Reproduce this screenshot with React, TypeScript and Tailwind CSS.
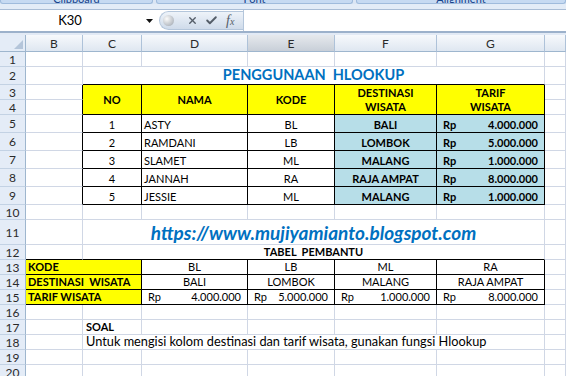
import type { ReactNode } from 'react';
import { X, Check } from 'lucide-react';

/* ── Sheet cells ── */

function Cell({
  className = '',
  r = false,
  b = false,
  middle = false,
  children,
}: {
  className?: string;
  r?: boolean;
  b?: boolean;
  middle?: boolean;
  children?: ReactNode;
}) {
  return (
    <div
      className={`flex min-w-0 whitespace-pre border-r border-b ${middle ? 'items-center' : 'items-end pb-[1px]'} ${
        r ? 'border-r-black' : 'border-r-[#d0d7e5]'
      } ${b ? 'border-b-black' : 'border-b-[#d0d7e5]'} ${className}`}
    >
      {children}
    </div>
  );
}

function RowHead({ n }: { n: number }) {
  return (
    <div className="flex items-center justify-center border-r border-b border-r-[#9eb6ce] border-b-[#c3d2e4] bg-[#e4ecf7] text-[12px] text-[#2a2a2a]">
      {n}
    </div>
  );
}

function ColHead({ label, hover = false }: { label: string; hover?: boolean }) {
  return (
    <div
      className={`flex items-center justify-center border-r border-b border-r-[#aec2d9] border-b-[#9eb6ce] bg-linear-to-b text-[12px] text-[#2a2a2a] ${
        hover ? 'from-[#e6e9ed] to-[#c8cfd8]' : 'from-[#f7f9fc] to-[#dfe7f1]'
      }`}
    >
      {label}
    </div>
  );
}

function Blank({ n }: { n: number }) {
  return (
    <>
      <RowHead n={n} />
      <Cell />
      <Cell />
      <Cell />
      <Cell />
      <Cell />
      <Cell />
      <Cell />
    </>
  );
}

function Money({ v, bold = false }: { v: string; bold?: boolean }) {
  return (
    <Cell r b className={`justify-between px-[6px] ${bold ? 'bg-[#b7dee8] font-bold' : ''}`}>
      <span>Rp</span>
      <span>{v}</span>
    </Cell>
  );
}

function RibbonGroup({ label, className }: { label: string; className: string }) {
  return (
    <div className={`h-[4px] overflow-hidden rounded-b-[3px] border-x border-b border-[#9fbbdc] bg-[#c6daf2] ${className}`}>
      <div className="-mt-[8px] text-center text-[11px] leading-[13px] text-[#15428b]">{label}</div>
    </div>
  );
}

const students = [
  { no: 1, nama: 'ASTY', kode: 'BL', dest: 'BALI', tarif: '4.000.000' },
  { no: 2, nama: 'RAMDANI', kode: 'LB', dest: 'LOMBOK', tarif: '5.000.000' },
  { no: 3, nama: 'SLAMET', kode: 'ML', dest: 'MALANG', tarif: '1.000.000' },
  { no: 4, nama: 'JANNAH', kode: 'RA', dest: 'RAJA AMPAT', tarif: '8.000.000' },
  { no: 5, nama: 'JESSIE', kode: 'ML', dest: 'MALANG', tarif: '1.000.000' },
];

const head = 'justify-center bg-[#ffff00] font-bold row-span-2';

export default function App() {
  return (
    <div className="h-[376px] w-[566px] overflow-hidden bg-white font-['Lato',sans-serif] text-[11px] leading-[13px] text-black">
      {/* ── Ribbon remnant ── */}
      <div className="flex h-[4px] gap-[3px] bg-[#dbe6f4]">
        <RibbonGroup label="Clipboard" className="w-[153px]" />
        <RibbonGroup label="Font" className="w-[197px]" />
        <RibbonGroup label="Alignment" className="flex-1" />
      </div>
      <div className="h-[6px] border-b border-[#a9bdd6] bg-[#e3ecf7]" />

      {/* ── Formula bar ── */}
      <div className="flex h-[21px] items-center bg-white">
        <div className="flex w-[159px] items-center">
          <span className="w-[140px] text-center text-[13px]">K30</span>
          <svg width="7" height="4" viewBox="0 0 7 4" className="ml-[6px]">
            <path d="M0 0h7L3.5 4z" fill="#111" />
          </svg>
        </div>
        <div className="flex h-[19px] w-[84px] items-center rounded-l-full border border-r-0 border-[#b4c6db] bg-linear-to-b from-[#eef3f9] to-[#cfdbea] pl-[3px]">
          <div className="h-[11px] w-[11px] rounded-full bg-radial-[at_35%_35%] from-[#fbfbfb] to-[#9aa2ac]" />
          <X className="ml-[13px] h-[11px] w-[11px] text-[#545d68]" strokeWidth={3} />
          <Check className="ml-[7px] h-[13px] w-[13px] text-[#545d68]" strokeWidth={3.5} />
          <span className="ml-[8px] font-['Liberation_Serif',serif] text-[14px] leading-none text-[#545d68] italic">
            f<span className="text-[10px]">x</span>
          </span>
        </div>
        <div className="h-full flex-1 border-l border-[#b4c6db]" />
      </div>
      <div className="h-[4px] border-t-2 border-[#9cb1cb] bg-[#e2eaf5]" />

      {/* ── Worksheet ── */}
      <div className="grid grid-cols-[26px_57px_59px_106px_87px_102px_108px_1fr] grid-rows-[17px_15px_18px_15px_15px_18px_18px_18px_18px_18px_15px_25px_15px_15px_15px_15px_15px_15px_15px_15px_15px]">
        {/* header row */}
        <div className="flex items-end justify-end border-r border-b border-r-[#9eb6ce] border-b-[#9eb6ce] bg-[#e4ecf7] p-[2px]">
          <svg width="9" height="9" viewBox="0 0 9 9">
            <path d="M9 0v9H0z" fill="#b4c5da" />
          </svg>
        </div>
        <ColHead label="B" />
        <ColHead label="C" />
        <ColHead label="D" />
        <ColHead label="E" hover />
        <ColHead label="F" />
        <ColHead label="G" />
        <ColHead label="" />

        <Blank n={1} />

        {/* row 2: title */}
        <RowHead n={2} />
        <Cell />
        <Cell b className="col-span-5 justify-center text-[14.5px] leading-[17px] font-bold text-[#0070c0]">
          PENGGUNAAN  HLOOKUP
        </Cell>
        <Cell />

        {/* rows 3-4: table header */}
        <RowHead n={3} />
        <Cell r />
        <Cell r b middle className={head}>NO</Cell>
        <Cell r b middle className={head}>NAMA</Cell>
        <Cell r b middle className={head}>KODE</Cell>
        <Cell r b middle className={`${head} text-center leading-[14px]`}>
          {'DESTINASI\nWISATA'}
        </Cell>
        <Cell r b middle className={`${head} text-center leading-[14px]`}>
          {'TARIF\nWISATA'}
        </Cell>
        <Cell />
        <RowHead n={4} />
        <Cell r />
        <Cell />

        {/* rows 5-9: data */}
        {students.map((s, i) => (
          <div key={s.no} className="contents">
            <RowHead n={5 + i} />
            <Cell r />
            <Cell r b className="justify-center">{s.no}</Cell>
            <Cell r b className="pl-[2px]">{s.nama}</Cell>
            <Cell r b className="justify-center">{s.kode}</Cell>
            <Cell r b className="justify-center bg-[#b7dee8] font-bold">{s.dest}</Cell>
            <Money v={s.tarif} bold />
            <Cell />
          </div>
        ))}

        <Blank n={10} />

        {/* row 11: url */}
        <RowHead n={11} />
        <Cell />
        <Cell className="col-span-5 justify-center text-[19px] leading-[21px] font-bold text-[#0070c0] italic">
          https://www.mujiyamianto.blogspot.com
        </Cell>
        <Cell />

        {/* row 12 */}
        <RowHead n={12} />
        <Cell b />
        <Cell b className="col-span-5 justify-center font-bold">TABEL  PEMBANTU</Cell>
        <Cell />

        {/* rows 13-15: helper table */}
        <RowHead n={13} />
        <Cell r b className="col-span-2 bg-[#ffff00] pl-[2px] font-bold">KODE</Cell>
        <Cell r b className="justify-center">BL</Cell>
        <Cell r b className="justify-center">LB</Cell>
        <Cell r b className="justify-center">ML</Cell>
        <Cell r b className="justify-center">RA</Cell>
        <Cell />

        <RowHead n={14} />
        <Cell r b className="col-span-2 bg-[#ffff00] pl-[2px] font-bold">DESTINASI  WISATA</Cell>
        <Cell r b className="justify-center">BALI</Cell>
        <Cell r b className="justify-center">LOMBOK</Cell>
        <Cell r b className="justify-center">MALANG</Cell>
        <Cell r b className="justify-center">RAJA AMPAT</Cell>
        <Cell />

        <RowHead n={15} />
        <Cell r b className="col-span-2 bg-[#ffff00] pl-[2px] font-bold">TARIF WISATA</Cell>
        <Money v="4.000.000" />
        <Money v="5.000.000" />
        <Money v="1.000.000" />
        <Money v="8.000.000" />
        <Cell />

        <Blank n={16} />

        {/* rows 17-18: soal */}
        <RowHead n={17} />
        <Cell />
        <Cell className="pl-[3px] font-bold">SOAL</Cell>
        <Cell />
        <Cell />
        <Cell />
        <Cell />
        <Cell />

        <RowHead n={18} />
        <Cell />
        <Cell className="col-span-5 pl-[3px] text-[12.75px]">
          Untuk mengisi kolom destinasi dan tarif wisata, gunakan fungsi Hlookup
        </Cell>
        <Cell />

        <Blank n={19} />
        <Blank n={20} />
      </div>
    </div>
  );
}
